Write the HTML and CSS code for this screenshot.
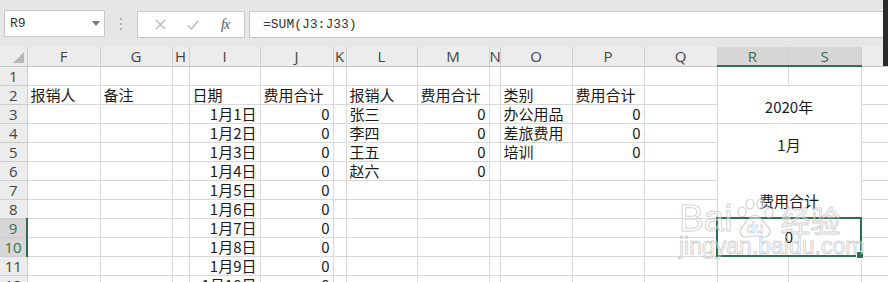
FILE: index.html
```html
<!doctype html>
<html lang="zh-CN">
<head>
  <meta charset="UTF-8">
  <title>费用统计</title>
  <link rel="stylesheet" href="styles.css">
</head>
<body>
<div class="toolbar">
  <div class="namebox">
    <span>R9</span>
    <svg class="caret" width="8" height="5" viewBox="0 0 8 5"><path d="M0 0h8L4 5z" fill="#7a7a7a"/></svg>
  </div>
  <div class="grip">
    <svg width="3" height="12" viewBox="0 0 3 12"><rect x="0" y="0" width="2" height="2" fill="#b0b0b0"/><rect x="0" y="5" width="2" height="2" fill="#b0b0b0"/><rect x="0" y="10" width="2" height="2" fill="#b0b0b0"/></svg>
  </div>
  <div class="fnbox">
    <svg class="ico" width="11" height="11" viewBox="0 0 11 11"><path d="M1 1l9 9M10 1l-9 9" stroke="#b8b8b8" stroke-width="1.3"/></svg>
    <svg class="ico" width="12" height="10" viewBox="0 0 12 10"><path d="M1 5.5l3.5 3.5L11 1" stroke="#b8b8b8" stroke-width="1.3" fill="none"/></svg>
    <span class="fx">fx</span>
  </div>
  <div class="formula">=SUM(J3:J33)</div>
</div>

<div class="sheet">
  <table class="grid">
    <colgroup>
      <col style="width:27px"><col style="width:73px"><col style="width:72px"><col style="width:17px">
      <col style="width:71px"><col style="width:73px"><col style="width:13px"><col style="width:71px">
      <col style="width:72px"><col style="width:11px"><col style="width:72px"><col style="width:72px">
      <col style="width:73px"><col style="width:71px"><col style="width:73px"><col style="width:27px">
    </colgroup>
    <thead>
      <tr>
        <th class="corner"><span class="tri"></span></th>
        <th>F</th><th>G</th><th>H</th><th>I</th><th>J</th><th>K</th><th>L</th>
        <th>M</th><th>N</th><th>O</th><th>P</th><th>Q</th>
        <th class="on">R</th><th class="on">S</th><th class="edge"></th>
      </tr>
    </thead>
    <tbody>
      <tr><th>1</th><td></td><td></td><td></td><td></td><td></td><td></td><td></td><td></td><td></td><td></td><td></td><td></td><td></td><td></td><td></td></tr>
      <tr><th>2</th><td>报销人</td><td>备注</td><td></td><td>日期</td><td>费用合计</td><td></td><td>报销人</td><td>费用合计</td><td></td><td>类别</td><td>费用合计</td><td></td>
        <td class="merge mid" colspan="2" rowspan="2">2020年</td><td></td></tr>
      <tr><th>3</th><td></td><td></td><td></td><td class="num">1月1日</td><td class="num">0</td><td></td><td>张三</td><td class="num">0</td><td></td><td>办公用品</td><td class="num">0</td><td></td><td></td></tr>
      <tr><th>4</th><td></td><td></td><td></td><td class="num">1月2日</td><td class="num">0</td><td></td><td>李四</td><td class="num">0</td><td></td><td>差旅费用</td><td class="num">0</td><td></td>
        <td class="merge mid" colspan="2" rowspan="2">1月</td><td></td></tr>
      <tr><th>5</th><td></td><td></td><td></td><td class="num">1月3日</td><td class="num">0</td><td></td><td>王五</td><td class="num">0</td><td></td><td>培训</td><td class="num">0</td><td></td><td></td></tr>
      <tr><th>6</th><td></td><td></td><td></td><td class="num">1月4日</td><td class="num">0</td><td></td><td>赵六</td><td class="num">0</td><td></td><td></td><td></td><td></td>
        <td class="merge low" colspan="2" rowspan="3">费用合计</td><td></td></tr>
      <tr><th>7</th><td></td><td></td><td></td><td class="num">1月5日</td><td class="num">0</td><td></td><td></td><td></td><td></td><td></td><td></td><td></td><td></td></tr>
      <tr><th>8</th><td></td><td></td><td></td><td class="num">1月6日</td><td class="num">0</td><td></td><td></td><td></td><td></td><td></td><td></td><td></td><td></td></tr>
      <tr><th class="on">9</th><td></td><td></td><td></td><td class="num">1月7日</td><td class="num">0</td><td></td><td></td><td></td><td></td><td></td><td></td><td></td>
        <td class="merge picked" colspan="2" rowspan="2">0</td><td></td></tr>
      <tr><th class="on">10</th><td></td><td></td><td></td><td class="num">1月8日</td><td class="num">0</td><td></td><td></td><td></td><td></td><td></td><td></td><td></td><td></td></tr>
      <tr><th>11</th><td></td><td></td><td></td><td class="num">1月9日</td><td class="num">0</td><td></td><td></td><td></td><td></td><td></td><td></td><td></td><td></td><td></td><td></td></tr>
      <tr><th>12</th><td></td><td></td><td></td><td class="num">1月10日</td><td class="num">0</td><td></td><td></td><td></td><td></td><td></td><td></td><td></td><td></td><td></td><td></td></tr>
    </tbody>
  </table>

  <!-- watermark from the source page -->
  <div class="watermark">
    <div class="wm-logo">
      <span>Bai</span>
      <svg width="46" height="40" viewBox="0 0 44 40">
        <g fill="rgba(255,255,255,0.5)" stroke="rgba(140,140,140,0.4)" stroke-width="1.2">
          <ellipse cx="9" cy="13" rx="4" ry="5"/>
          <ellipse cx="17" cy="5" rx="4" ry="5"/>
          <ellipse cx="28" cy="5" rx="4" ry="5"/>
          <ellipse cx="36" cy="14" rx="4" ry="5"/>
          <path d="M22 16c-6 0-8 7-13 12-4 4-1 11 5 10 4-1 6-1 8-1s4 0 8 1c6 1 9-6 5-10-5-5-7-12-13-12z"/>
        </g>
        <text x="22" y="34" text-anchor="middle" font-family="Liberation Sans, sans-serif" font-size="14" font-weight="bold" fill="rgba(255,255,255,0.6)" stroke="rgba(140,140,140,0.4)" stroke-width="0.8">du</text>
      </svg>
      <span class="wm-cn">经验</span>
    </div>
    <div class="wm-url">jingyan.baidu.com</div>
  </div>
</div>
</body>
</html>
```

FILE: styles.css
```css
* {
  margin: 0;
  padding: 0;
  box-sizing: border-box;
}
html, body {
  width: 888px;
  height: 282px;
  overflow: hidden;
  background: #fff;
  font-family: "Noto Sans CJK SC", "Noto Sans", sans-serif;
}

/* formula bar */
.toolbar {
  height: 47px;
  background: #e6e6e6;
  display: flex;
  align-items: flex-start;
  padding: 10px 5px 0 4px;
  box-shadow: inset -5px 0 #2a2a2a;
}
.namebox {
  width: 101px;
  height: 27px;
  background: #fff;
  border: 1px solid #c8c8c8;
  display: flex;
  align-items: center;
  justify-content: space-between;
  padding: 0 4px 0 5px;
  font: 13px "Liberation Mono", monospace;
  color: #333;
}
.grip {
  width: 32px;
  height: 27px;
  display: flex;
  align-items: center;
  justify-content: center;
}
.fnbox {
  width: 108px;
  height: 27px;
  margin-top: 1px;
  background: #fff;
  border: 1px solid #c8c8c8;
  display: flex;
  align-items: center;
  justify-content: space-around;
  padding: 0 4px 0 6px;
}
.fx {
  font: italic 14px "Liberation Serif", serif;
  color: #555;
  letter-spacing: -1px;
}
.formula {
  flex: 1;
  height: 27px;
  margin-top: 1px;
  margin-left: 4px;
  background: #fff;
  border: 1px solid #c8c8c8;
  border-right: 0;
  padding-left: 13px;
  font: 13px/25px "Liberation Mono", monospace;
  color: #333;
}

/* sheet */
.sheet {
  position: relative;
}
.grid {
  width: 888px;
  table-layout: fixed;
  border-collapse: collapse;
  font-size: 15px;
  color: #1a1a1a;
}
.grid tr {
  height: 19px;
}
.grid th {
  background: #ececec;
  font: 15px/18px "Open Sans", "Noto Sans", sans-serif;
  font-weight: normal;
  color: #444;
  text-align: center;
  border-right: 1px solid #cdcdcd;
  border-bottom: 1px solid #cdcdcd;
  overflow: hidden;
  padding: 0;
}
.grid thead th {
  border-bottom: 1px solid #c4c4c4;
}
.grid thead th.on {
  background: #d6d6d6;
  color: #3c6e52;
  border-bottom: 2px solid #2f6e4e;
}
.grid tbody th.on {
  background: #d6d6d6;
  color: #3c6e52;
  border-right: 2px solid #2f6e4e;
}
.grid th.edge {
  border-right: 0;
  box-shadow: inset -5px 0 #2a2a2a;
}
.corner {
  position: relative;
}
.tri {
  position: absolute;
  right: 3px;
  bottom: 3px;
  border-left: 11px solid transparent;
  border-bottom: 11px solid #b8b8b8;
}
.grid td {
  border-right: 1px solid #d9d9d9;
  border-bottom: 1px solid #d9d9d9;
  padding: 0 3px;
  line-height: 18px;
  white-space: nowrap;
  overflow: hidden;
  vertical-align: middle;
}
.grid td.num {
  text-align: right;
}
.grid td.merge {
  text-align: center;
  overflow: visible;
}
.grid td.mid {
  padding-top: 6px;
}
.grid td.low {
  vertical-align: bottom;
  padding-bottom: 7px;
}
.grid td.picked {
  position: relative;
  border: 2px solid #2f6e4e;
}
.grid td.picked::after {
  content: "";
  position: absolute;
  right: -4px;
  bottom: -4px;
  width: 6px;
  height: 6px;
  background: #2f6e4e;
  border: 1px solid #fff;
}

/* watermark overlay */
.watermark {
  position: absolute;
  left: 679px;
  top: 151px;
  color: rgba(255, 255, 255, 0.5);
  -webkit-text-stroke: 1px rgba(140, 140, 140, 0.4);
  font-family: "Liberation Sans", sans-serif;
  pointer-events: none;
}
.wm-logo {
  display: flex;
  align-items: center;
  font-size: 37px;
  line-height: 42px;
}
.wm-cn {
  font-family: "Noto Sans CJK SC", sans-serif;
  font-size: 30px;
  margin-left: 2px;
}
.wm-url {
  font-size: 23px;
  line-height: 24px;
  margin-top: -6px;
}
```
